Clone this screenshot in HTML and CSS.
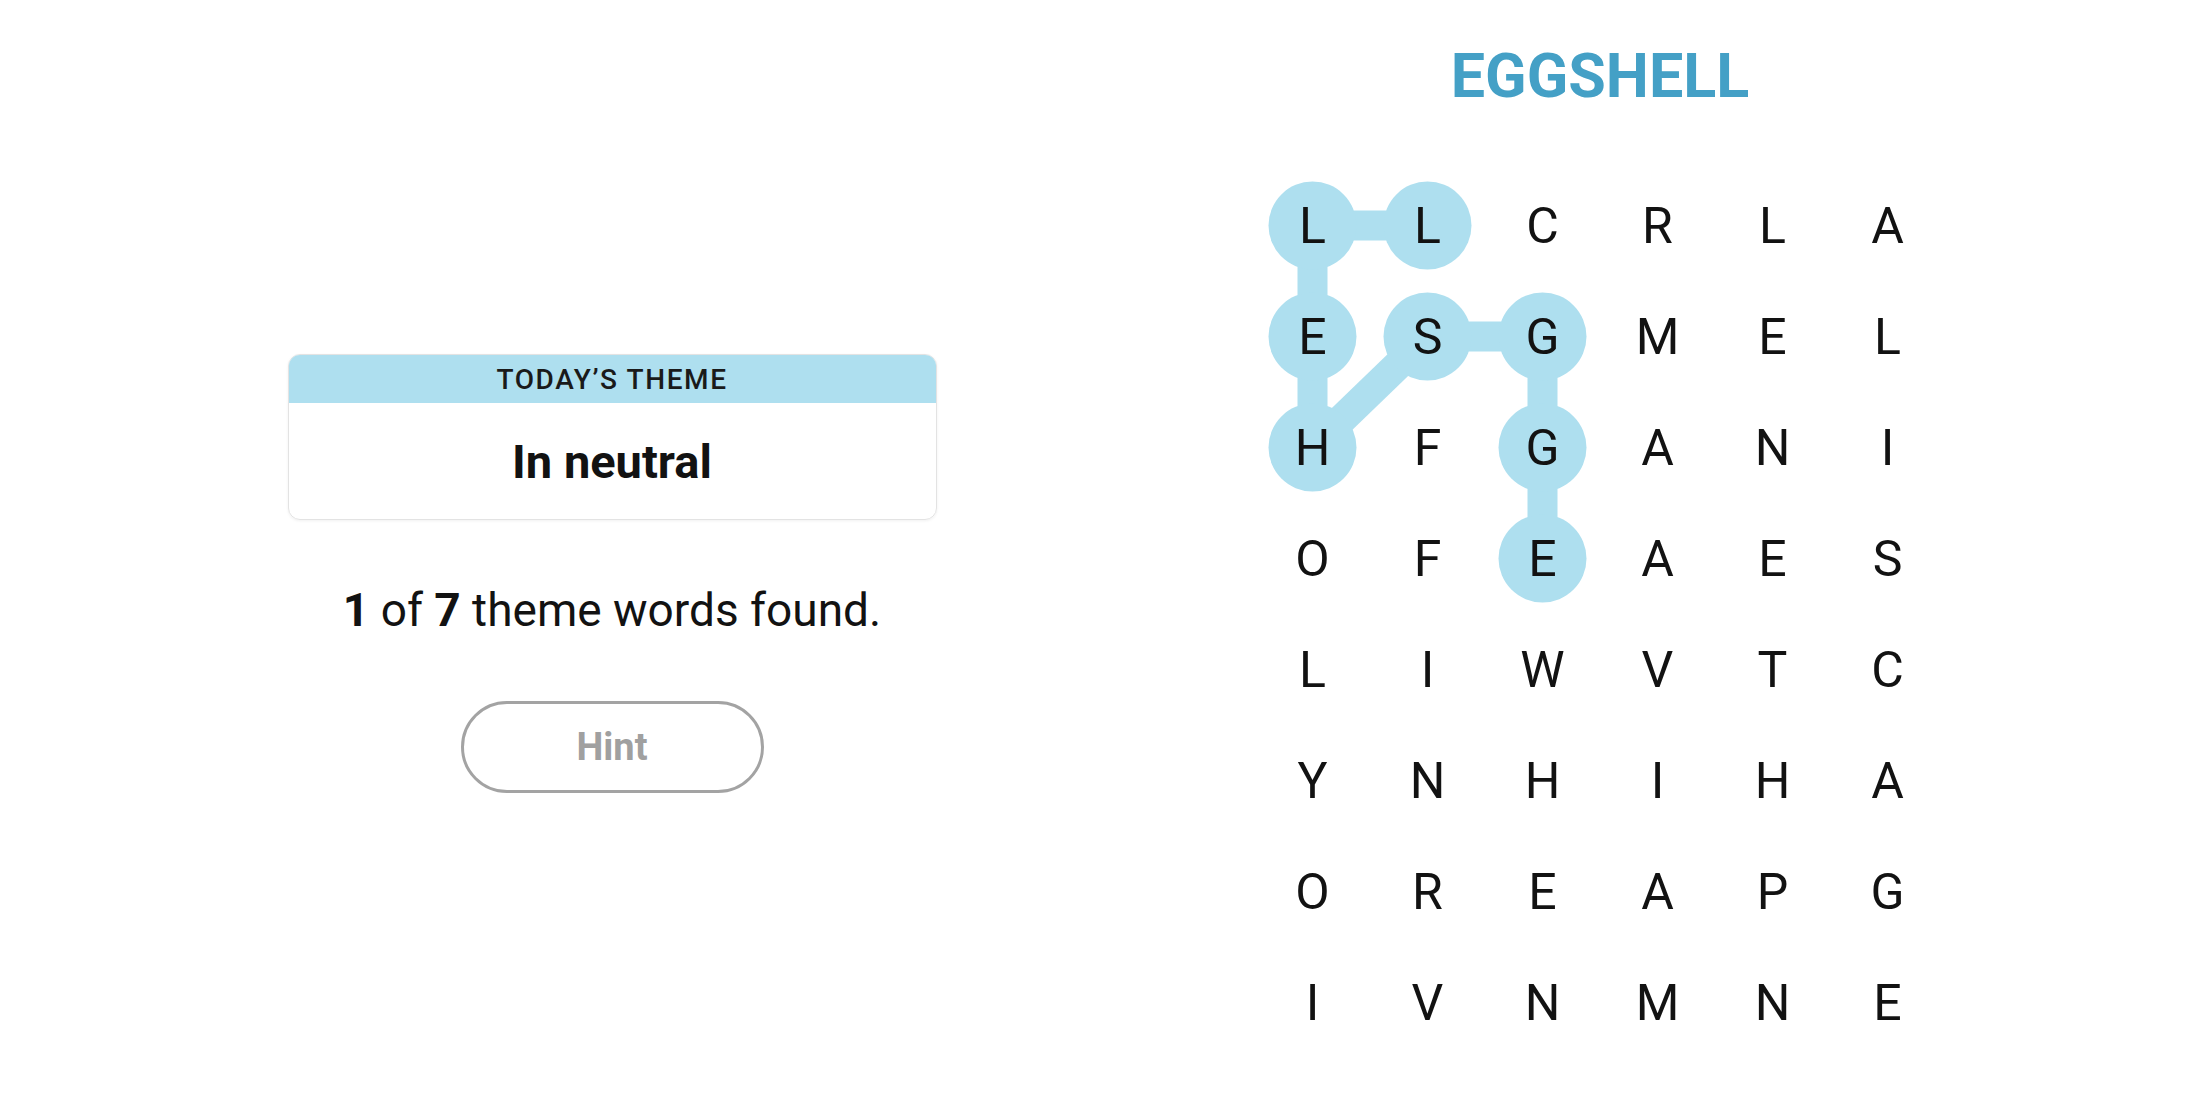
FILE: index.html
```html
<!DOCTYPE html>
<html lang="en">
<head>
    <meta charset="UTF-8">
    <meta name="viewport" content="width=device-width, initial-scale=1.0">
    <title>Strands</title>
    <link rel="stylesheet" href="styles.css">
</head>
<body>
    <div class="page">
        <!-- left: theme + progress -->
        <div class="side">
            <div class="theme-card">
                <div class="theme-head">TODAY’S THEME</div>
                <div class="theme-body">In neutral</div>
            </div>
            <p class="progress"><b>1</b> of <b>7</b> theme words found.</p>
            <button class="hint-btn">Hint</button>
        </div>

        <!-- right: board -->
        <div class="board">
            <h1 class="found-word">EGGSHELL</h1>
            <div class="grid-wrap">
                <svg class="trail" width="690" height="888" viewBox="0 0 690 888">
                    <g stroke="#aedfef" stroke-width="30" stroke-linecap="butt">
                        <line x1="57.5" y1="55.5" x2="172.5" y2="55.5" />
                        <line x1="57.5" y1="55.5" x2="57.5" y2="277.5" />
                        <line x1="57.5" y1="277.5" x2="172.5" y2="166.5" />
                        <line x1="172.5" y1="166.5" x2="287.5" y2="166.5" />
                        <line x1="287.5" y1="166.5" x2="287.5" y2="388.5" />
                    </g>
                    <g fill="#aedfef">
                        <circle cx="57.5" cy="55.5" r="44" />
                        <circle cx="172.5" cy="55.5" r="44" />
                        <circle cx="57.5" cy="166.5" r="44" />
                        <circle cx="172.5" cy="166.5" r="44" />
                        <circle cx="287.5" cy="166.5" r="44" />
                        <circle cx="57.5" cy="277.5" r="44" />
                        <circle cx="287.5" cy="277.5" r="44" />
                        <circle cx="287.5" cy="388.5" r="44" />
                    </g>
                </svg>
                <div class="grid">
                    <span>L</span><span>L</span><span>C</span><span>R</span><span>L</span><span>A</span>
                    <span>E</span><span>S</span><span>G</span><span>M</span><span>E</span><span>L</span>
                    <span>H</span><span>F</span><span>G</span><span>A</span><span>N</span><span>I</span>
                    <span>O</span><span>F</span><span>E</span><span>A</span><span>E</span><span>S</span>
                    <span>L</span><span>I</span><span>W</span><span>V</span><span>T</span><span>C</span>
                    <span>Y</span><span>N</span><span>H</span><span>I</span><span>H</span><span>A</span>
                    <span>O</span><span>R</span><span>E</span><span>A</span><span>P</span><span>G</span>
                    <span>I</span><span>V</span><span>N</span><span>M</span><span>N</span><span>E</span>
                </div>
            </div>
        </div>
    </div>
</body>
</html>
```

FILE: styles.css
```css
html, body {
    margin: 0;
    padding: 0;
    background: #fff;
}
body {
    font-family: Roboto, "Liberation Sans", sans-serif;
    color: #121212;
    width: 2200px;
    height: 1100px;
    overflow: hidden;
}
.page {
    display: flex;
    justify-content: center;
    padding-left: 12px;
}
.side {
    width: 988px;
    display: flex;
    flex-direction: column;
    align-items: center;
    padding-top: 354px;
}
.theme-card {
    width: 649px;
    box-sizing: border-box;
    border: 1px solid #e3e3e3;
    border-radius: 12px;
    overflow: hidden;
    box-shadow: 0 1px 3px rgba(0, 0, 0, .06);
}
.theme-head {
    height: 48px;
    line-height: 50px;
    background: #aedfef;
    text-align: center;
    font-size: 28px;
    font-weight: 500;
    letter-spacing: 1.6px;
    color: #1a1a1a;
}
.theme-body {
    height: 116px;
    display: flex;
    align-items: center;
    justify-content: center;
    font-size: 47px;
    font-weight: 700;
    color: #121212;
}
.progress {
    margin: 62px 0 0;
    font-size: 46px;
    line-height: 56px;
    color: #121212;
}
.progress b {
    font-weight: 700;
}
.hint-btn {
    margin-top: 63px;
    width: 303px;
    height: 92px;
    box-sizing: border-box;
    border: 3px solid #a3a3a3;
    border-radius: 46px;
    background: #fff;
    font-family: Roboto, "Liberation Sans", sans-serif;
    font-size: 38px;
    font-weight: 700;
    color: #a0a0a0;
    padding: 0;
}
.board {
    width: 988px;
    display: flex;
    flex-direction: column;
    align-items: center;
}
.found-word {
    margin: 36px 0 0;
    line-height: 80px;
    font-size: 61px;
    font-weight: 700;
    color: #44a0c6;
}
.grid-wrap {
    position: relative;
    margin-top: 54px;
    width: 690px;
    height: 888px;
}
.trail {
    position: absolute;
    left: 0;
    top: 0;
}
.grid {
    position: relative;
    display: grid;
    grid-template-columns: repeat(6, 115px);
    grid-template-rows: repeat(8, 111px);
}
.grid span {
    display: flex;
    align-items: center;
    justify-content: center;
    font-size: 50px;
    font-weight: 400;
    color: #121212;
}
```
